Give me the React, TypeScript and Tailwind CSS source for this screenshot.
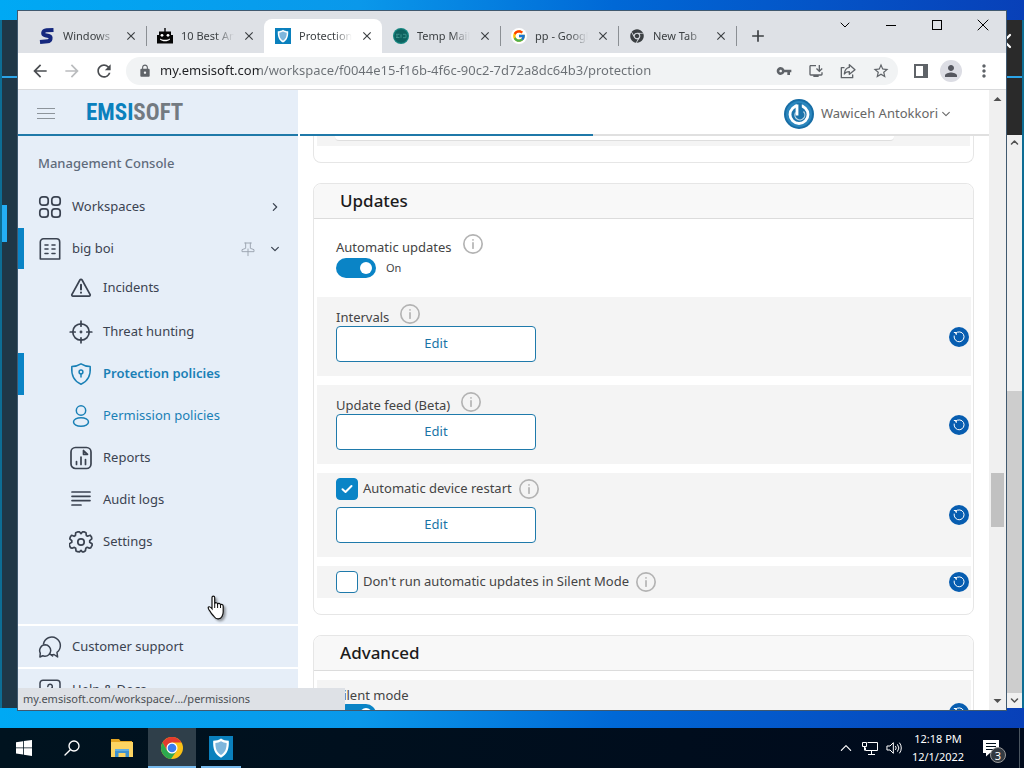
import React, { useState } from 'react';
import { FcGoogle } from 'react-icons/fc';
import { FaChrome } from 'react-icons/fa';
import {
  MdArrowBack,
  MdArrowForward,
  MdRefresh,
  MdLock,
  MdVpnKey,
  MdInstallDesktop,
  MdStarBorder,
  MdPerson,
  MdMoreVert,
  MdClose,
  MdAdd,
} from 'react-icons/md';

type IconProps = { className?: string };

const Stroke: React.FC<IconProps & { children: React.ReactNode; width?: number }> = ({ className, children, width = 1.5 }) => (
  <svg
    viewBox="0 0 24 24"
    className={className}
    fill="none"
    stroke="currentColor"
    strokeWidth={width}
    strokeLinecap="round"
    strokeLinejoin="round"
    aria-hidden="true"
  >
    {children}
  </svg>
);

const WorkspacesIcon = () => (
  <Stroke className="size-6" width={1.7}>
    <rect x="1.8" y="1.8" width="8.4" height="8.4" rx="3" />
    <rect x="13.8" y="1.8" width="8.4" height="8.4" rx="3" />
    <rect x="1.8" y="13.8" width="8.4" height="8.4" rx="3" />
    <rect x="13.8" y="13.8" width="8.4" height="8.4" rx="3" />
  </Stroke>
);

const BuildingIcon = () => (
  <Stroke className="size-6" width={1.6}>
    <path d="M2.3 22V5a3.2 3.2 0 0 1 3.2-3.2h13A3.2 3.2 0 0 1 21.7 5v17z" />
    <path d="M7 8h3M14 8h3M7 12h3M14 12h3M7 16.5h3M14 16.5h3" />
  </Stroke>
);

const IncidentsIcon = () => (
  <Stroke className="size-6" width={1.7}>
    <path d="M10.9 4 3 18.3a1.2 1.2 0 0 0 1.1 1.9h15.8a1.2 1.2 0 0 0 1.1-1.9L13.1 4a1.3 1.3 0 0 0-2.2 0z" />
    <path d="M12 8.8v4.6M12 16.4v.3" strokeWidth="2" />
  </Stroke>
);

const TargetIcon = () => (
  <Stroke className="size-6" width={1.7}>
    <circle cx="12" cy="12" r="8.2" />
    <path d="M12 1.2v5M12 17.8v5M1.2 12h5M17.8 12h5" />
    <circle cx="12" cy="12" r=".6" fill="currentColor" />
  </Stroke>
);

const ShieldIcon = () => (
  <Stroke className="size-6" width={1.5}>
    <path d="M12 1.8c2.8 1.8 5.8 2.6 9.2 2.8.6 8.3-1.8 14.6-9.2 17.600C4.600 19.200 2.200 12.900 2.800 4.600 6.200 4.400 9.200 3.600 12 1.800z" />
    <circle cx="12" cy="10" r="1.9" />
    <path d="M12 12v3" />
  </Stroke>
);

const PersonIcon = () => (
  <Stroke className="size-6" width={1.5}>
    <circle cx="12" cy="6.5" r="4.7" />
    <ellipse cx="12" cy="18" rx="7.5" ry="4.3" />
  </Stroke>
);

const ReportsIcon = () => (
  <Stroke className="size-6" width={1.7}>
    <rect x="2" y="1.5" width="20" height="21" rx="4.5" />
    <path d="M7.5 18.5v-3M12 18.5V11M16.5 18.5v-5M14.5 4.5v3.800h4z" />
  </Stroke>
);

const AuditIcon = () => (
  <Stroke className="size-6" width={1.7}>
    <path d="M3 4h18M3 8.300h18M3 12.600h18M3 17h9" />
  </Stroke>
);

const SettingsIcon = () => (
  <Stroke className="size-6" width={1.7}>
    <path d="M9 1.800h1.400L12 3.600l1.600-1.800H15l2 1 .3 2.700 1.200.7 2.700-1 1.300 1.700.3 1.900-2.100 1.800v1.600l2.300 1.500.2 1.500-1.500 2.600-1.400.3-2.100-.8-1.400.9-.4 2.600-1.500 1h-1.700L12 20.300l-1.500 1.600-2-.2-1.500-.8-.3-2.600-1.400-.9-2.300.8-1.500-.6-1.200-2.500.3-1.500 2.200-1.400v-1.600L.8 8.900l.5-1.900 1.300-1.700 2.500 1 1.300-.7.3-2.800z" />
    <circle cx="12" cy="12" r="3.2" />
  </Stroke>
);

const SupportIcon = () => (
  <Stroke className="size-6" width={1.5}>
    <path d="M5.5 9A8.5 8.5 0 1 1 19 17.3l.6 4.700-3.600-2.500a9 9 0 0 1-3 .2" />
    <path d="M7.3 9.800a5.700 5.700 0 1 1-.6 11.400 5 5 0 0 1-2-.5L1.900 22l.4-3.900a5.700 5.700 0 0 1 5-8.300zM11.500 18.500l3 2.500" />
  </Stroke>
);

const HelpIcon = () => (
  <Stroke className="size-6" width={1.5}>
    <path d="M5 2.200h14a3 3 0 0 1 3 3v11a3 3 0 0 1-3 3h-4L12 22l-3-2.800H5a3 3 0 0 1-3-3v-11a3 3 0 0 1 3-3z" />
    <path d="M9.800 8.500a2.300 2.300 0 1 1 3.300 2.200c-.7.3-1.100.8-1.100 1.600M12 15v.2" />
  </Stroke>
);

const PinIcon: React.FC<IconProps> = ({ className }) => (
  <Stroke className={className} width={1.4}>
    <path d="M7 3h10M8.500 3v8L3 13v3h18v-3l-5.500-2V3M12 12v10" />
  </Stroke>
);

const Chevron: React.FC<IconProps & { dir: 'down' | 'right' | 'up' | 'left'; width?: number }> = ({ dir, className, width = 2 }) => {
  const paths = {
    down: 'M4 8l8 8 8-8',
    up: 'M4 16l8-8 8 8',
    right: 'M8 4l8 8-8 8',
    left: 'M16 4l-8 8 8 8',
  };
  return (
    <Stroke className={className} width={width}>
      <path d={paths[dir]} />
    </Stroke>
  );
};

const ShieldTile: React.FC<IconProps> = ({ className }) => (
  <svg viewBox="0 0 24 24" className={className} aria-hidden="true">
    <rect width="24" height="24" fill="#0a80bd" />
    <path d="M12 2.500c2.200 1.500 4.800 2.200 7.800 2.300.4 8-1.500 13.500-7.800 17-6.300-3.500-8.200-9-7.800-17 3-.1 5.600-.8 7.800-2.300z" fill="#fff" />
    <path d="M12 5.300c1.700 1 3.500 1.600 5.600 1.800.1 5.600-1.300 9.400-5.600 12-4.300-2.600-5.700-6.400-5.600-12 2.100-.2 3.900-.8 5.600-1.800z" fill="#7fb6dc" />
  </svg>
);

const SLogo = () => (
  <svg viewBox="0 0 16 16" className="size-4" aria-hidden="true">
    <path d="M14.500 2 7.500 2.300C3.500 2.600 3.200 6.600 6.300 7.200l3.400.8c3 .8 2.200 5-1 5.200L1 14" fill="none" stroke="#15287e" strokeWidth="4" />
  </svg>
);

const BotIcon = () => (
  <svg viewBox="0 0 16 16" className="size-4" aria-hidden="true">
    <path d="M7.300 0h1.400v3.500H7.300zM2 3.500h12V7h2v8.500H0V7h2z" fill="#050505" />
    <circle cx="5" cy="7.300" r="1.400" fill="#fff" />
    <circle cx="11" cy="7.300" r="1.400" fill="#fff" />
    <path d="M3 10.500c2 1.800 8 1.800 10 0v1c-2 2.400-8 2.400-10 0z" fill="#fff" />
  </svg>
);

const TempMailIcon = () => (
  <svg viewBox="0 0 16 16" className="size-4" aria-hidden="true">
    <circle cx="8" cy="8" r="8" fill="#168680" />
    <circle cx="8" cy="8" r="6.800" fill="#0e625f" />
    <path d="M3 6.300h3.500M3 9.500h3.500M3 8h2M8 6.300v3.500M10 6.300h3v3.400h-3" stroke="#3b928b" fill="none" />
  </svg>
);

const ChromeLogo = () => (
  <svg viewBox="0 0 24 24" className="size-6" aria-hidden="true">
    <circle cx="12" cy="12" r="11" fill="#fbc116" />
    <path d="M2.500 6.500a11 11 0 0 1 19 0H12L7.200 14.700z" fill="#e33b2e" />
    <path d="M2.500 6.500A11 11 0 0 0 11 23l5.700-8.300L12 17.500 7.200 14.700z" fill="#2da94f" />
    <circle cx="12" cy="12" r="5.500" fill="#fff" />
    <circle cx="12" cy="12" r="4.300" fill="#3b7ded" />
  </svg>
);

const FolderIcon = () => (
  <svg viewBox="0 0 24 24" className="size-6" aria-hidden="true">
    <path d="M1 3h8l1.500 2H22v6H1z" fill="#e5a622" />
    <path d="M1 6h22v15H1z" fill="#fcd462" />
    <path d="M5 13h14v8h-3.500v-4h-7v4H5z" fill="#3f92cf" />
    <path d="M5 13h14v2H5z" fill="#62aee0" />
  </svg>
);

const AvatarIcon = () => (
  <svg viewBox="0 0 30 30" className="size-[30px]" aria-hidden="true">
    <circle cx="15" cy="15" r="15" fill="#176da5" />
    <circle cx="15" cy="15" r="13" fill="#2b86bd" />
    <circle cx="15" cy="15.500" r="9" fill="#1b73aa" stroke="#fff" strokeWidth="2.800" />
    <path d="M12.800 4h5v10h-5z" fill="#1b73aa" />
    <path d="M13 5.500v11" stroke="#fff" strokeWidth="2.800" />
    <path d="M19.500 12.500a5 5 0 1 1-8 1" fill="none" stroke="#fff" strokeWidth="1.200" opacity=".7" />
  </svg>
);

const tabs = [
  { title: 'Windows', icon: <SLogo /> },
  { title: '10 Best An', icon: <BotIcon /> },
  { title: 'Protection', icon: <ShieldTile className="size-4" />, active: true },
  { title: 'Temp Mail', icon: <TempMailIcon /> },
  {
    title: 'pp - Google',
    icon: (
      <span className="flex size-4 items-center justify-center rounded-full bg-white">
        <FcGoogle className="size-[14px]" />
      </span>
    ),
  },
  { title: 'New Tab', icon: <FaChrome className="size-[14px] text-[#3c4043]" /> },
];

const subItems = [
  { label: 'Incidents', icon: <IncidentsIcon /> },
  { label: 'Threat hunting', icon: <TargetIcon /> },
  { label: 'Protection policies', icon: <ShieldIcon />, active: true },
  { label: 'Permission policies', icon: <PersonIcon />, hovered: true },
  { label: 'Reports', icon: <ReportsIcon /> },
  { label: 'Audit logs', icon: <AuditIcon /> },
  { label: 'Settings', icon: <SettingsIcon /> },
];

const TabStrip = () => (
  <div className="flex h-[42px] shrink-0 bg-[#dee1e6] pl-[10px] text-[#3c4043]">
    <div className="flex items-end">
      {tabs.map((tab, i) => (
        <div
          key={tab.title}
          className={`flex h-[34px] w-[118px] items-center gap-2 pr-2 pl-[11px] ${tab.active ? 'rounded-t-lg bg-white' : ''}`}
        >
          <span className="flex size-4 shrink-0 items-center justify-center">{tab.icon}</span>
          <a href="#" className="w-0 grow overflow-hidden whitespace-nowrap text-[11px] [mask-image:linear-gradient(90deg,#000_65%,transparent)]">
            {tab.title}
          </a>
          <button aria-label={`Close ${tab.title}`} className="relative">
            <MdClose className="size-[14px]" />
            {i !== 1 && i !== 2 && <span className="absolute top-[-3px] -right-[9px] h-5 w-px bg-[#8b8f94]" />}
          </button>
        </div>
      ))}
    </div>
    <button aria-label="New tab" className="mt-2 ml-3 flex items-center">
      <MdAdd className="size-5" />
    </button>
    <div className="ml-auto flex h-7 items-center text-black">
      <button aria-label="Search tabs" className="flex w-[46px] justify-center">
        <Chevron dir="down" className="size-3" width={2} />
      </button>
      <button aria-label="Minimize" className="flex w-[46px] justify-center">
        <span className="h-px w-[10px] bg-black" />
      </button>
      <button aria-label="Maximize" className="flex w-[46px] justify-center">
        <span className="size-[10px] border border-black" />
      </button>
      <button aria-label="Close" className="flex w-[46px] justify-center">
        <Stroke className="size-3" width={2}>
          <path d="M2 2l20 20M22 2L2 22" />
        </Stroke>
      </button>
    </div>
  </div>
);

const Toolbar = () => (
  <div className="flex h-[37px] shrink-0 items-center gap-3 border-b border-[#d9dadc] bg-white pr-3 pl-3 text-[#5f6368]">
    <button aria-label="Back"><MdArrowBack className="size-5 text-[#4a4d51]" /></button>
    <button aria-label="Forward"><MdArrowForward className="size-5 text-[#babcbe]" /></button>
    <button aria-label="Reload"><MdRefresh className="size-5 text-[#4a4d51]" /></button>
    <div className="flex h-7 min-w-0 grow items-center rounded-full bg-[#f1f3f4] pr-2 pl-3">
      <MdLock className="mr-2 size-[14px] shrink-0" />
      <input
        aria-label="Address"
        defaultValue="my.emsisoft.com/workspace/f0044e15-f16b-4f6c-90c2-7d72a8dc64b3/protection"
        className="min-w-0 grow bg-[linear-gradient(90deg,#202124_99px,#6a6f74_99px)] bg-clip-text text-[13px] text-transparent outline-none"
      />
      <div className="flex items-center gap-4">
        <button aria-label="Passwords"><MdVpnKey className="size-4" /></button>
        <button aria-label="Install"><MdInstallDesktop className="size-4" /></button>
        <button aria-label="Share">
          <Stroke className="size-4" width={2}>
            <path d="M6 7H2v15h17v-4M14 2.500 22.500 10 14 17v-4c-4 0-6 1-7.500 3.500C7 11 10 7 14 6.500z" />
          </Stroke>
        </button>
        <button aria-label="Bookmark"><MdStarBorder className="size-[18px]" /></button>
      </div>
    </div>
    <button aria-label="Side panel" className="ml-1 h-[14px] w-[14px] border-2 border-r-[5px] border-[#5f6368]" />
    <button aria-label="Profile" className="flex size-[22px] items-center justify-center rounded-full bg-[#dcdde4]">
      <MdPerson className="size-[18px] text-[#55575f]" />
    </button>
    <button aria-label="Menu"><MdMoreVert className="size-5" /></button>
  </div>
);

const Sidebar = () => (
  <aside className="flex w-[280px] shrink-0 flex-col bg-[#e6eef8] text-[13px] text-[#3b4351]">
    <div className="flex h-[46px] shrink-0 items-center border-b-2 border-[#1f79a9] pt-0.5 pl-[19px]">
      <button aria-label="Toggle menu" className="flex w-[18px] flex-col gap-1">
        <span className="h-px bg-[#8d949b]" />
        <span className="h-px bg-[#8d949b]" />
        <span className="h-px bg-[#8d949b]" />
      </button>
      <a href="#" className="ml-[31px] font-['Liberation_Sans_Narrow','Roboto_Condensed',sans-serif] text-[23px] leading-7 font-bold text-[#737a81]">
        <span className="text-[#0a80bd]">EMSI</span>SOFT
      </a>
    </div>
    <nav className="flex min-h-0 grow flex-col overflow-hidden">
      <h2 className="mt-4 mb-3 pl-5 leading-[22px] font-medium text-[#5f6b7b]">Management Console</h2>
      <a href="#" className="flex h-[42px] items-center pr-[18px] pl-5">
        <WorkspacesIcon />
        <span className="ml-[10px] grow">Workspaces</span>
        <Chevron dir="right" className="size-[10px]" width={3} />
      </a>
      <a href="#" className="flex h-[41px] items-center border-l-[6px] border-[#0a84c6] pr-[18px] pl-[14px]">
        <BuildingIcon />
        <span className="ml-[10px] grow">big boi</span>
        <PinIcon className="mr-[14px] size-4 text-[#9aa3ae]" />
        <Chevron dir="down" className="size-[10px]" width={3} />
      </a>
      <div className="flex flex-col">
        {subItems.map((item) => (
          <a
            key={item.label}
            href="#"
            className={`flex h-[42px] items-center gap-[10px] border-l-[6px] pl-[45px] first:mb-1 first:h-[38px] ${
              item.active
                ? 'border-[#0a84c6] font-semibold text-[#1a80b6]'
                : item.hovered
                  ? 'border-transparent text-[#1a80b6]'
                  : 'border-transparent'
            }`}
          >
            {item.icon}
            {item.label}
          </a>
        ))}
      </div>
    </nav>
    <a href="#" className="flex h-[43px] shrink-0 items-center border-t-2 border-white pl-5">
      <SupportIcon />
      <span className="ml-[10px]">Customer support</span>
    </a>
    <a href="#" className="flex h-[43px] shrink-0 items-center border-t-2 border-white pl-5">
      <HelpIcon />
      <span className="ml-[10px]">Help &amp; Docs</span>
    </a>
  </aside>
);

const InfoButton = () => (
  <button aria-label="More information" className="size-5 shrink-0 text-[#b3b3b3]">
    <Stroke className="size-5" width={2}>
      <circle cx="12" cy="12" r="11" />
      <path d="M12 10.500V17M12 7v.3" />
    </Stroke>
  </button>
);

const ResetButton = () => (
  <button aria-label="Reset to default" className="flex size-5 shrink-0 items-center justify-center rounded-full bg-[#075db0] text-white">
    <Stroke className="size-3" width={2}>
      <path d="M5 4.500A10 10 0 1 1 2.200 10M2.500 3h4v4" />
    </Stroke>
  </button>
);

const EditButton: React.FC<{ label: string }> = ({ label }) => (
  <button aria-label={`Edit ${label}`} className="block h-9 w-[200px] rounded border border-[#1f7aab] bg-white text-[13px] text-[#1a74a6]">
    Edit
  </button>
);

const Band: React.FC<{ className: string; plain?: boolean; children: React.ReactNode }> = ({ className, plain, children }) => (
  <div className={`flex items-center justify-between pr-0.5 pl-[19px] ${plain ? '' : 'bg-[#f4f4f4]'}`}>
    <div className={className}>{children}</div>
    {!plain && <ResetButton />}
  </div>
);

const Label: React.FC<{ text: string; info?: boolean }> = ({ text, info = true }) => (
  <div className="flex h-[22px] items-start gap-[11px]">
    <span className="pt-[3px] leading-5">{text}</span>
    {info && <InfoButton />}
  </div>
);

const Toggle: React.FC<{ label: string }> = ({ label }) => {
  const [on, setOn] = useState(true);
  return (
    <label className="flex items-center gap-[10px] text-[11px]">
      <input
        type="checkbox"
        role="switch"
        aria-label={label}
        checked={on}
        onChange={() => setOn(!on)}
        className="h-5 w-10 appearance-none rounded-full bg-gray-400 before:m-1 before:block before:size-3 before:rounded-full before:bg-white checked:bg-[#0a84c6] checked:before:ml-6"
      />
      {on ? 'On' : 'Off'}
    </label>
  );
};

const CheckRow: React.FC<{ label: string; defaultChecked?: boolean }> = ({ label, defaultChecked }) => (
  <div className="flex items-center gap-[7px]">
    <label className="flex items-center gap-[5px]">
      <span className="relative size-[22px]">
        <input
          type="checkbox"
          defaultChecked={defaultChecked}
          className="peer block size-[22px] appearance-none rounded border border-[#1f7aab] bg-white checked:border-[#0a84c6] checked:bg-[#0a84c6]"
        />
        <Stroke className="pointer-events-none absolute top-[5px] left-[5px] size-3 text-white opacity-0 peer-checked:opacity-100" width={4}>
          <path d="M3 12.500l6 5.500L21 6" />
        </Stroke>
      </span>
      {label}
    </label>
    <InfoButton />
  </div>
);

const Card: React.FC<{ title: string; className?: string; children: React.ReactNode }> = ({ title, className = '', children }) => (
  <section className={`mt-5 rounded-lg border border-[#e6e6e6] pr-0.5 pl-[3px] ${className}`}>
    <h3 className="-mr-0.5 -ml-[3px] h-[35px] rounded-t-lg border-b border-[#dcdcdc] bg-[#f8f8f8] pl-[26px] text-[17px] leading-[34px] font-medium text-[#1c1c1c]">{title}</h3>
    {children}
  </section>
);

const PolicySettings = () => (
  <main className="flex min-w-0 grow flex-col bg-white text-[13px] text-[#444]">
    <header className="flex h-[44px] shrink-0 items-center justify-end pt-1 pr-[38px]">
      <button className="flex items-center gap-[7px] text-[#666]">
        <AvatarIcon />
        <span>Wawiceh Antokkori</span>
        <Chevron dir="down" className="-ml-1 size-[10px]" width={2.5} />
      </button>
    </header>
    <div className="ml-0.5 h-0.5 shrink-0 bg-[#e0e0e0]">
      <div className="h-full w-[293px] bg-[#1f79a9]" />
    </div>
    <div className="min-h-0 grow overflow-hidden px-[15px]">
      <section className="h-[27px] rounded-b-lg border border-t-0 border-[#e6e6e6] px-[3px]">
        <div className="h-[10px] bg-[#f4f4f4] pr-[76px] pl-[18px]">
          <div className="h-[5px] rounded-b-sm border-b border-[#dedede] bg-white" />
        </div>
      </section>

      <Card title="Updates" className="pb-4">
        <Band plain className="pt-[15px] pb-[19px]">
          <Label text="Automatic updates" />
          <div className="mt-0.5">
            <Toggle label="Automatic updates" />
          </div>
        </Band>
        <div className="flex flex-col gap-[9px]">
          <Band className="pt-[7px] pb-[14px]">
            <Label text="Intervals" />
            <EditButton label="intervals" />
          </Band>
          <Band className="pt-[7px] pb-[14px]">
            <Label text="Update feed (Beta)" />
            <EditButton label="update feed" />
          </Band>
          <Band className="pt-[5px] pb-[14px]">
            <div className="mb-[7px]">
              <CheckRow label="Automatic device restart" defaultChecked />
            </div>
            <EditButton label="automatic device restart" />
          </Band>
          <Band className="py-[5px]">
            <CheckRow label="Don't run automatic updates in Silent Mode" />
          </Band>
        </div>
      </Card>

      <Card title="Advanced">
        <div className="mt-[9px]">
          <Band className="pt-0.5 pb-[22px]">
            <Label text="Silent mode" info={false} />
            <Toggle label="Silent mode" />
          </Band>
        </div>
      </Card>
    </div>
  </main>
);

const PageScrollbar = () => (
  <div className="flex w-[17px] shrink-0 flex-col items-center bg-[#f0f0f0] text-[#505050]">
    <svg viewBox="0 0 17 17" className="size-[17px] shrink-0" aria-hidden="true">
      <path d="M4.500 11h8l-4-4z" fill="currentColor" />
    </svg>
    <div className="grow-[366]" />
    <div className="w-[13px] grow-[54] bg-[#c1c1c1]" />
    <div className="grow-[166]" />
    <svg viewBox="0 0 17 17" className="size-[17px] shrink-0" aria-hidden="true">
      <path d="M4.500 6h8l-4 4z" fill="currentColor" />
    </svg>
  </div>
);

const RearWindow = () => (
  <div className="absolute top-5 right-0 bottom-5 left-0 flex flex-col border-r-2 border-l-2 border-[#0d6d94] bg-[linear-gradient(90deg,#1f3747_50%,#2a2a2a_50%)]">
    <div className="flex h-[58px] shrink-0 items-start justify-end border-b-2 border-[#2ba4e8] pt-3 pr-[6px] text-white">
      <Chevron dir="left" className="size-[18px]" width={3} />
    </div>
    <div className="flex min-h-0 grow justify-between">
      <div className="mt-[127px] h-[37px] w-[5px] bg-[#24aef5]" />
      <div className="mt-[57px] flex w-[15px] flex-col items-center bg-[#f0f0f0] text-[#505050]">
        <Chevron dir="up" className="m-[3px] size-[9px] shrink-0" width={4} />
        <div className="grow-[241]" />
        <div className="w-full grow-[301] bg-[#cdcdcd]" />
        <Chevron dir="down" className="m-[3px] size-[9px] shrink-0" width={4} />
      </div>
    </div>
  </div>
);

const HandCursor = () => (
  <svg viewBox="0 0 20 26" className="absolute top-[584px] left-[188px] h-[26px] w-5 drop-shadow-[2px_2px_1px_rgba(0,0,0,0.35)]" aria-hidden="true">
    <path
      d="M6 2.500c0-1.800 2.700-1.800 2.700 0v6c.5-1.200 2.700-1 2.900.6.6-1.200 2.700-.8 2.900.8.800-1 2.700-.5 2.700 1.300V17c0 2-.6 3.300-1.200 4.500-1.500 3-6 3-7.500.500-1.500-2-3-3-4-5-1-1.500-2-2.500-2.300-4 0-1.800 2-1.700 3.800.7z"
      fill="#fff"
      stroke="#111"
      strokeWidth="1.200"
    />
    <path d="M8.700 8v5M11.600 9v4M14.500 10v3" stroke="#111" />
  </svg>
);

const Taskbar = () => (
  <footer className="flex h-10 shrink-0 items-center bg-[linear-gradient(90deg,#00131f,#000a1c)] text-white">
    <button aria-label="Start" className="flex h-full w-12 items-center justify-center">
      <svg viewBox="0 0 16 16" className="size-4" fill="#fff" aria-hidden="true">
        <path d="M0 2.200 7 1.200v6.300H0zM7.800 1.100 16 0v7.500H7.800zM0 8.300h7v6.300l-7-1zM7.800 8.300H16V16l-8.200-1.200z" />
      </svg>
    </button>
    <button aria-label="Search" className="flex h-full w-12 items-center justify-center">
      <Stroke className="size-4" width={2}>
        <circle cx="15" cy="9" r="7.500" />
        <path d="M9.500 14.500 1.500 22.500" />
      </Stroke>
    </button>
    <button aria-label="File Explorer" className="flex h-full w-[52px] items-center justify-center">
      <FolderIcon />
    </button>
    <button aria-label="Google Chrome" className="flex h-full w-12 items-center justify-center border-b-2 border-[#76b9ed] bg-[#2f3f4a] pt-0.5">
      <ChromeLogo />
    </button>
    <button aria-label="Emsisoft" className="ml-[5px] flex h-full w-10 items-center justify-center border-b-2 border-[#76b9ed] pt-0.5">
      <ShieldTile className="size-6" />
    </button>
    <div className="ml-auto flex items-center">
      <button aria-label="Show hidden icons" className="flex w-6 justify-center">
        <Chevron dir="up" className="size-[14px]" width={2} />
      </button>
      <button aria-label="Network" className="flex w-6 justify-center">
        <svg viewBox="0 0 18 16" className="h-4 w-[18px]" fill="none" stroke="currentColor" aria-hidden="true">
          <path d="M6.500 2.500h10v8h-12v-3M10.500 10.500v4M7 14.500h7M1.500 2.500h4v4h-4zM3.500 6.500v4" />
        </svg>
      </button>
      <button aria-label="Volume" className="flex w-6 justify-center">
        <Stroke className="size-4" width={1.5}>
          <path d="M2 9h4l5-5v16l-5-5H2zM14.500 9.500a4 4 0 0 1 0 5M17.500 7a8 8 0 0 1 0 10M20.500 4.500a12 12 0 0 1 0 15" />
        </Stroke>
      </button>
      <div className="w-16 text-center text-[11px] leading-[18px]">
        <div>12:18 PM</div>
        <div>12/1/2022</div>
      </div>
      <button aria-label="Notifications" className="relative mr-[19px] ml-3 flex w-[18px] justify-center">
        <svg viewBox="0 0 18 18" className="size-[18px]" aria-hidden="true">
          <path d="M1 1h16v13H8l-4 3.500V14H1z" fill="#fff" />
          <path d="M4 4.500h10M4 7.500h10M4 10.500h10" stroke="#00101c" />
        </svg>
        <span className="absolute top-2 left-2 flex size-4 items-center justify-center rounded-full border border-[#999] bg-[#333a42] text-[11px] leading-none">
          3
        </span>
      </button>
      <span className="h-10 w-[5px] border-l border-[#4a5560]" />
    </div>
  </footer>
);

export default function App() {
  return (
    <div className="flex h-screen flex-col overflow-hidden font-['Noto_Sans',sans-serif]">
      <div className="relative min-h-0 grow bg-[linear-gradient(90deg,#00a9f4,#0a98ea_35%,#0068d6_60%,#0840b8)]">
        <RearWindow />
        <div className="absolute top-[10px] right-[17px] bottom-[17px] left-[17px] flex flex-col overflow-hidden border border-[#40596f] bg-white">
          <TabStrip />
          <Toolbar />
          <div className="flex min-h-0 grow">
            <Sidebar />
            <PolicySettings />
            <PageScrollbar />
          </div>
          <div className="absolute bottom-0 left-0 w-[327px] bg-[#dee1e6] pl-[5px] text-[11px] leading-[22px] text-[#4b4f54]">
            my.emsisoft.com/workspace/.../permissions
          </div>
          <HandCursor />
        </div>
      </div>
      <Taskbar />
    </div>
  );
}
